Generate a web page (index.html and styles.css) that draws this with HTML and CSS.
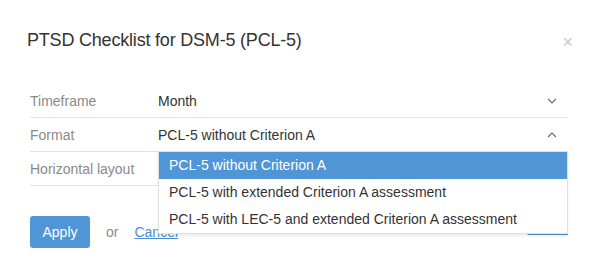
FILE: index.html
```html
<!DOCTYPE html>
<html lang="en">
<head>
  <meta charset="UTF-8">
  <meta name="viewport" content="width=device-width, initial-scale=1.0">
  <title>PTSD Checklist for DSM-5 (PCL-5)</title>
  <link rel="stylesheet" href="styles.css">
</head>
<body>
  <div class="modal">
    <div class="modal-header">
      <h2>PTSD Checklist for DSM-5 (PCL-5)</h2>
      <span class="close">&times;</span>
    </div>
    <div class="settings">
      <div class="row">
        <div class="label">Timeframe</div>
        <div class="value">
          <span>Month</span>
          <svg class="chevron" width="10" height="6" viewBox="0 0 10 6"><polyline points="1,1 5,5 9,1" fill="none" stroke="#6b6b6b" stroke-width="1.2"/></svg>
        </div>
      </div>
      <div class="row">
        <div class="label">Format</div>
        <div class="value open">
          <span>PCL-5 without Criterion A</span>
          <svg class="chevron" width="10" height="6" viewBox="0 0 10 6"><polyline points="1,5 5,1 9,5" fill="none" stroke="#6b6b6b" stroke-width="1.2"/></svg>
          <ul class="dropdown">
            <li class="selected">PCL-5 without Criterion A</li>
            <li>PCL-5 with extended Criterion A assessment</li>
            <li>PCL-5 with LEC-5 and extended Criterion A assessment</li>
          </ul>
        </div>
      </div>
      <div class="row">
        <div class="label">Horizontal layout</div>
        <div class="value"></div>
      </div>
    </div>
    <div class="actions">
      <button class="btn-apply">Apply</button>
      <span class="or">or</span>
      <a href="#" class="link">Cancel</a>
      <a href="#" class="link delete">Delete</a>
    </div>
  </div>
</body>
</html>
```

FILE: styles.css
```css
body {
  font-family: "Liberation Sans", Arial, sans-serif;
  margin: 0;
  padding: 0;
  background-color: #fff;
  color: #333;
}
.modal {
  padding: 0 29px 0 30px;
}
.modal-header {
  display: flex;
  justify-content: space-between;
  align-items: center;
  height: 84px;
  margin-left: -3px;
}
.modal-header h2 {
  margin: 0;
  font-size: 18px;
  font-weight: normal;
  letter-spacing: -0.2px;
  color: #333;
  padding-bottom: 4px;
}
.close {
  color: #c8c8c8;
  font-size: 18px;
  margin-right: -5px;
}
.row {
  display: flex;
  align-items: center;
  height: 33px;
  border-bottom: 1px solid #e3e3e3;
  font-size: 14px;
}
.label {
  width: 128px;
  color: #8a8a8a;
}
.value {
  flex: 1;
  display: flex;
  align-items: center;
  justify-content: space-between;
  position: relative;
  height: 100%;
}
.chevron {
  margin-right: 11px;
}
.dropdown {
  position: absolute;
  top: 34px;
  left: 0;
  right: 0;
  margin: 0;
  padding: 0;
  list-style: none;
  background-color: #fff;
  border: 1px solid #e0e0e0;
  border-top: none;
  box-shadow: 0 2px 3px rgba(0, 0, 0, 0.08);
  z-index: 2;
}
.dropdown li {
  height: 27px;
  line-height: 27px;
  padding: 0 10px;
  color: #333;
}
.dropdown li.selected {
  background-color: #5095d5;
  color: #fff;
}
.actions {
  display: flex;
  align-items: center;
  margin-top: 30px;
  font-size: 14px;
}
.btn-apply {
  background-color: #5095d5;
  color: #fff;
  border: none;
  border-radius: 3px;
  font-family: inherit;
  font-size: 14px;
  width: 60px;
  height: 32px;
  padding: 0;
}
.or {
  color: #8a8a8a;
  margin-left: 16px;
}
.link {
  color: #4a8fd3;
  margin-left: 16px;
  text-decoration: underline;
}
.delete {
  margin-left: auto;
  margin-bottom: 8px;
}
```
